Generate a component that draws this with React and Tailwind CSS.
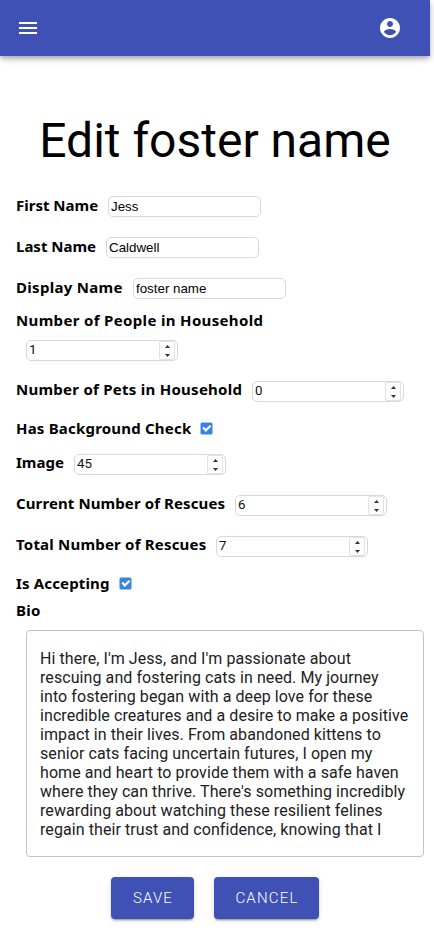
import React from "react";

function Label({ className = "", children }) {
  return (
    <span
      className={`shrink-0 whitespace-nowrap font-['Noto_Sans','Open_Sans',sans-serif] text-[15px] leading-5 font-bold text-black ${className}`}
    >
      {children}
    </span>
  );
}

function TextField({ label, labelClass, value }) {
  return (
    <div className="flex h-[41px] items-center gap-[10px]">
      <Label className={`-mt-[3px] ${labelClass}`}>{label}</Label>
      <input
        type="text"
        defaultValue={value}
        className="h-[21px] w-[152.5px] rounded-[5px] border border-[#d8d8d8] bg-white px-[2px] font-['Liberation_Sans',sans-serif] text-[13.333px] text-black outline-none"
      />
    </div>
  );
}

function NumberBox({ value }) {
  return (
    <div className="flex h-[21px] w-[152px] items-center rounded-[5px] border border-[#d8d8d8] bg-white pr-[2px] pl-[2px]">
      <span className="flex-1 pb-px font-[Roboto,sans-serif] text-[13.333px] leading-[18px] text-[#111]">{value}</span>
      <span className="flex h-[19px] w-[16px] flex-col items-center justify-center gap-[6px] rounded-[2px] border border-[#e2e2e2]">
        <svg width="5" height="3" viewBox="0 0 5 3"><path d="M0 3 2.5 0 5 3z" fill="#333" /></svg>
        <svg width="5" height="3" viewBox="0 0 5 3"><path d="M0 0 2.5 3 5 0z" fill="#333" /></svg>
      </span>
    </div>
  );
}

function NumberField({ label, labelClass, value }) {
  return (
    <div className="flex h-[41px] items-center gap-[10px]">
      <Label className={`-mt-[5px] ${labelClass}`}>{label}</Label>
      <NumberBox value={value} />
    </div>
  );
}

function CheckField({ label, labelClass }) {
  return (
    <div className="flex h-8 items-center gap-[9px]">
      <Label className={labelClass}>{label}</Label>
      <svg width="13" height="13" viewBox="0 0 13 13">
        <rect x="0.5" y="0.5" width="12" height="12" rx="1.5" fill="#3584e4" />
        <path d="M3.2 5.6 5.8 8.4 10.6 3.8" fill="none" stroke="#fff" strokeWidth="2.2" />
      </svg>
    </div>
  );
}

const bio = `Hi there, I'm Jess, and I'm passionate about
rescuing and fostering cats in need. My journey
into fostering began with a deep love for these
incredible creatures and a desire to make a positive
impact in their lives. From abandoned kittens to
senior cats facing uncertain futures, I open my
home and heart to provide them with a safe haven
where they can thrive. There's something incredibly
rewarding about watching these resilient felines
regain their trust and confidence, knowing that I`;

const buttonClass =
  "flex h-[42px] items-center justify-center rounded-[4px] bg-[#3f51b5] pt-px pl-px font-[Roboto,sans-serif] text-[15px] font-light tracking-[1.2px] text-white shadow-[0_3px_1px_-2px_rgba(0,0,0,0.2),0_2px_2px_0_rgba(0,0,0,0.14),0_1px_5px_0_rgba(0,0,0,0.12)]";

export default function App() {
  return (
    <div className="h-[932px] w-[434px] overflow-hidden bg-white text-black">
      <header className="flex h-14 w-[430px] items-center justify-between bg-[#3f51b5] pr-7 pl-4 shadow-[0_2px_4px_-1px_rgba(0,0,0,0.2),0_4px_5px_0_rgba(0,0,0,0.14),0_1px_10px_0_rgba(0,0,0,0.12)]">
        <svg width="24" height="24" viewBox="0 0 24 24" fill="#fff">
          <path d="M3 18h18v-2H3v2zm0-5h18v-2H3v2zm0-7v2h18V6H3z" />
        </svg>
        <svg width="24" height="24" viewBox="0 0 24 24" fill="#fff">
          <path d="M12 2C6.48 2 2 6.48 2 12s4.48 10 10 10 10-4.48 10-10S17.52 2 12 2zm0 3c1.66 0 3 1.34 3 3s-1.34 3-3 3-3-1.34-3-3 1.34-3 3-3zm0 14.2c-2.5 0-4.71-1.28-6-3.22.03-1.99 4-3.08 6-3.08 1.99 0 5.97 1.09 6 3.08-1.29 1.94-3.5 3.22-6 3.22z" />
        </svg>
      </header>

      <h1 className="mt-[57px] h-[55px] w-[430px] text-center font-[Roboto,sans-serif] text-[48px] leading-[56px] font-normal whitespace-nowrap">
        Edit foster name
      </h1>

      <form className="mt-[18px] pl-4" onSubmit={(e) => e.preventDefault()}>
        <TextField label="First Name" labelClass="w-[82px]" value="Jess" />
        <TextField label="Last Name" labelClass="w-[80px]" value="Caldwell" />
        <TextField label="Display Name" labelClass="w-[107px] tracking-[0.3px]" value="foster name" />
        <div className="flex h-[21px] items-center">
          <Label className="tracking-[0.34px]">Number of People in Household</Label>
        </div>
        <div className="flex h-[41px] items-center pl-[10px]">
          <NumberBox value="1" />
        </div>
        <NumberField label="Number of Pets in Household" labelClass="w-[226px] tracking-[0.26px]" value="0" />
        <CheckField label="Has Background Check" labelClass="w-[175px] tracking-[0.2px]" />
        <NumberField label="Image" labelClass="w-[48px]" value="45" />
        <NumberField label="Current Number of Rescues" labelClass="w-[209px] tracking-[0.1px]" value="6" />
        <NumberField label="Total Number of Rescues" labelClass="w-[190px] tracking-[0.2px]" value="7" />
        <CheckField label="Is Accepting" labelClass="w-[94px] tracking-[0.15px]" />
        <div className="flex h-[21px] items-center">
          <Label className="tracking-[0.3px]">Bio</Label>
        </div>
        <textarea
          defaultValue={bio}
          className="mt-[10px] ml-[10px] block h-[227px] w-[398px] resize-none overflow-hidden rounded-[4px] border border-[#c4c4c4] py-[18px] pr-[13px] pl-[13px] font-[Roboto,sans-serif] text-base leading-[19px] tracking-[0.08px] whitespace-pre text-[#212121] outline-none"
        />
        <div className="mt-5 ml-[95px] flex gap-5">
          <button className={`${buttonClass} w-[83px]`}>SAVE</button>
          <button className={`${buttonClass} w-[105px]`}>CANCEL</button>
        </div>
      </form>
    </div>
  );
}
